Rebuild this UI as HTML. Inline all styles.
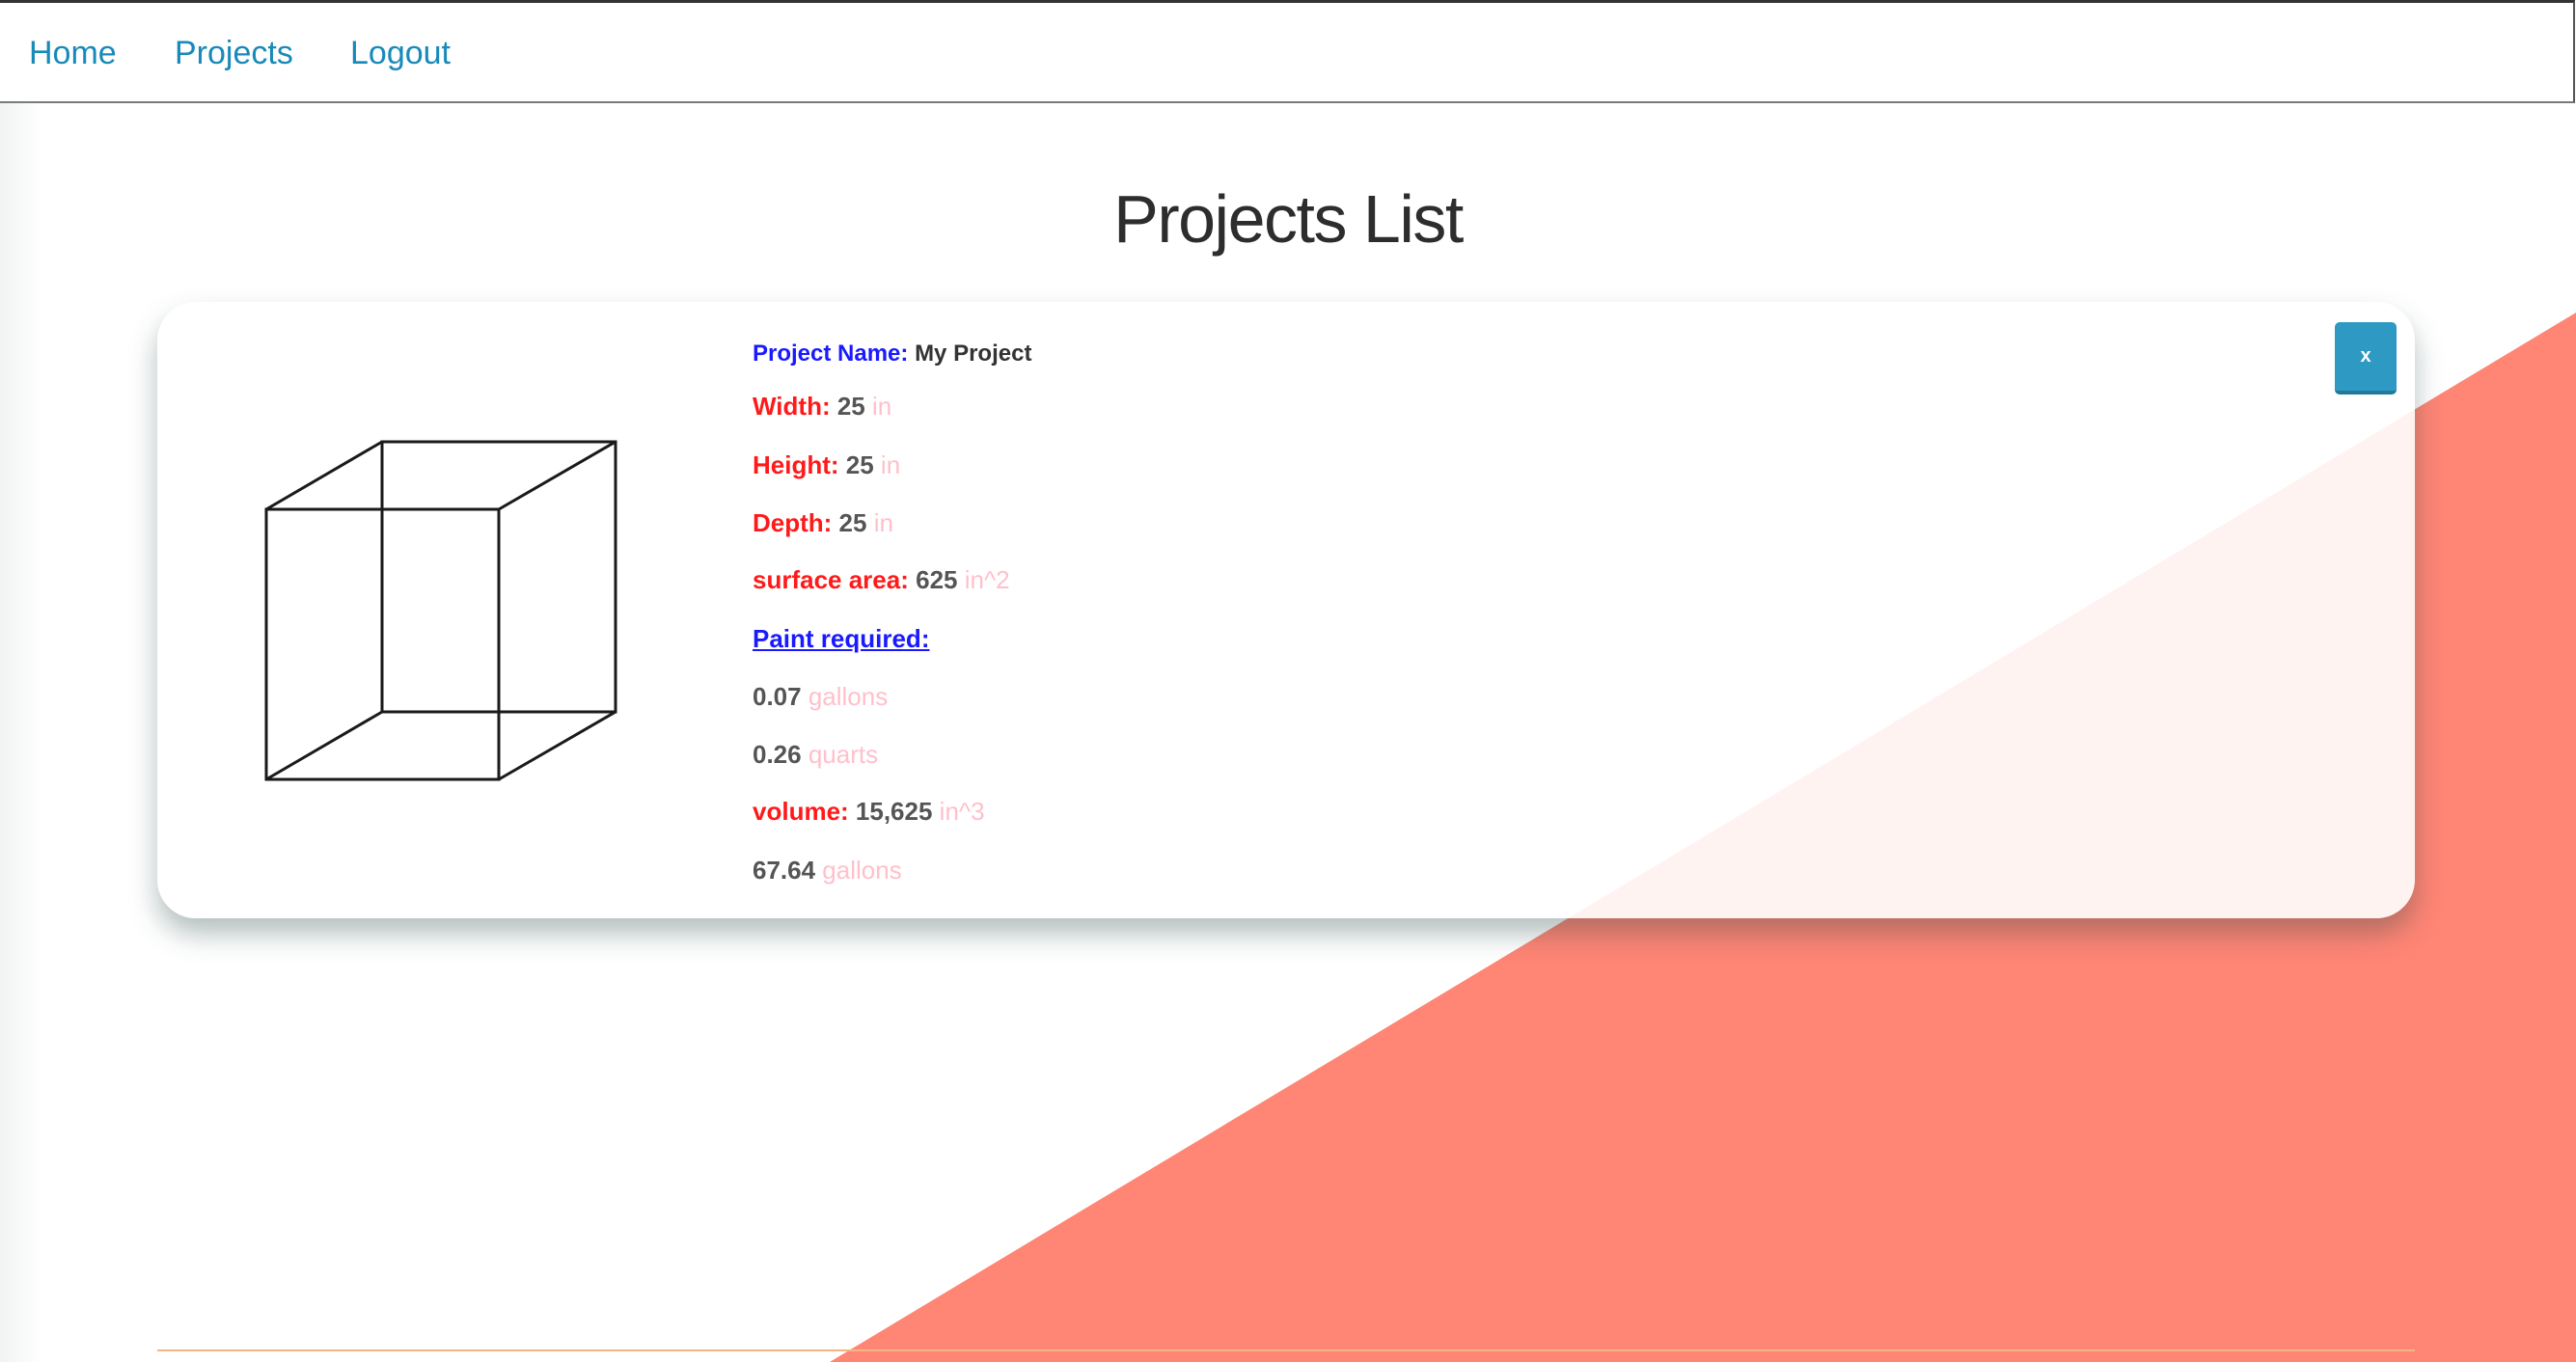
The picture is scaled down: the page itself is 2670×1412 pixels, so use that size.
<!DOCTYPE html>
<html><head><meta charset="utf-8"><style>
html,body{margin:0;padding:0;}
body{width:2670px;height:1412px;position:relative;overflow:hidden;background:#fff;font-family:"Liberation Sans",sans-serif;}
.lg{position:absolute;left:0;top:0;width:45px;height:1412px;background:linear-gradient(to right,#f1f3f3,#fff);}
.tri{position:absolute;left:0;top:0;}
.nav{position:absolute;left:0;top:0;width:2667px;height:102px;border-top:3px solid #333;border-bottom:2px solid #7a7a7a;border-right:2px solid #555;background:#fff;}
.nav a{position:absolute;top:33px;font-size:34px;color:#188ab9;text-decoration:none;}
h1{position:absolute;left:0;width:2670px;top:187px;margin:0;text-align:center;font-weight:normal;font-size:70px;color:#2d2d2d;letter-spacing:-1.5px;}
.card{position:absolute;left:163px;top:313px;width:2340px;height:639px;border-radius:40px;background:rgba(255,255,255,0.9);box-shadow:0 16px 28px rgba(40,70,70,0.35);}
.btn{position:absolute;left:2420px;top:334px;width:64px;height:71px;background:#2e9ac4;border-bottom:4px solid #24799b;border-radius:5px;color:#fff;font-weight:bold;font-size:20px;text-align:center;line-height:70px;}
.ln{position:absolute;left:780px;font-weight:bold;font-size:26px;color:#555;white-space:nowrap;}
.r{color:#ff1a1a}.b{color:#1a1aff}.u{color:#ffc0cb;font-weight:normal}
.bot{position:absolute;left:163px;top:1399px;width:2340px;height:2px;background:#f7b47f;}
</style></head><body>
<div class="lg"></div>
<svg class="tri" width="2670" height="1412"><polygon points="2670,324 2670,1412 860,1412" fill="#ff8575"/></svg>
<div class="nav"><a style="left:30px">Home</a><a style="left:181px">Projects</a><a style="left:363px">Logout</a></div>
<h1>Projects List</h1>
<div class="card"></div>
<svg style="position:absolute;left:0;top:0" width="700" height="900"><g fill="none" stroke="#1a1a1a" stroke-width="3"><rect x="276" y="528" width="241" height="280"/><rect x="396" y="458" width="242" height="280"/><path d="M276 528L396 458M517 528L638 458M276 808L396 738M517 808L638 738"/></g></svg>
<div class="btn">x</div>
<div class="ln" style="top:353px;font-size:24px"><span class="b">Project Name:</span> <span style="color:#333">My Project</span></div>
<div class="ln" style="top:406px"><span class="r">Width:</span> 25 <span class="u">in</span></div>
<div class="ln" style="top:467px"><span class="r">Height:</span> 25 <span class="u">in</span></div>
<div class="ln" style="top:527px"><span class="r">Depth:</span> 25 <span class="u">in</span></div>
<div class="ln" style="top:586px"><span class="r">surface area:</span> 625 <span class="u">in^2</span></div>
<div class="ln" style="top:647px"><span class="b" style="text-decoration:underline">Paint required:</span></div>
<div class="ln" style="top:707px">0.07 <span class="u">gallons</span></div>
<div class="ln" style="top:767px">0.26 <span class="u">quarts</span></div>
<div class="ln" style="top:826px"><span class="r">volume:</span> 15,625 <span class="u">in^3</span></div>
<div class="ln" style="top:887px">67.64 <span class="u">gallons</span></div>
<div class="bot"></div>
</body></html>
